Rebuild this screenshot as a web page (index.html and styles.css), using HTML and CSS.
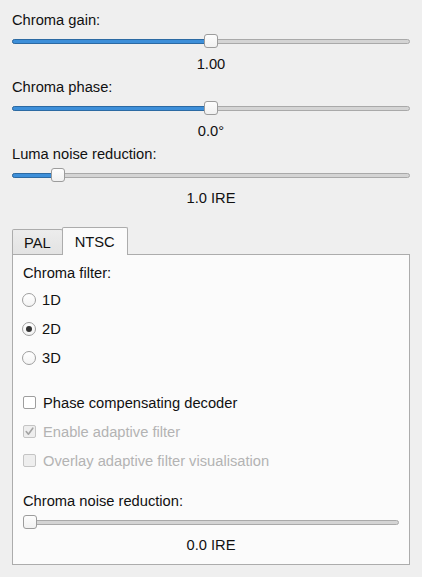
FILE: index.html
```html
<!DOCTYPE html>
<html>
<head>
<meta charset="utf-8">
<link rel="stylesheet" href="styles.css">
</head>
<body>
<div class="page">
  <div class="ctl">
    <div class="lbl">Chroma gain:</div>
    <div class="slider"><div class="groove"><div class="fill" style="width:50%"></div><div class="handle" style="left:calc((100% - 12px) * 0.5)"></div></div></div>
    <div class="val">1.00</div>
  </div>
  <div class="ctl">
    <div class="lbl">Chroma phase:</div>
    <div class="slider"><div class="groove"><div class="fill" style="width:50%"></div><div class="handle" style="left:calc((100% - 12px) * 0.5)"></div></div></div>
    <div class="val">0.0°</div>
  </div>
  <div class="ctl">
    <div class="lbl">Luma noise reduction:</div>
    <div class="slider"><div class="groove"><div class="fill" style="width:11%"></div><div class="handle" style="left:calc((100% - 12px) * 0.102)"></div></div></div>
    <div class="val">1.0 IRE</div>
  </div>

  <div class="tabs">
    <div class="tabbar">
      <div class="tab">PAL</div>
      <div class="tab active">NTSC</div>
    </div>
    <div class="panel">
      <div class="plbl">Chroma filter:</div>
      <div class="group">
        <div class="opt"><span class="radio"></span><span>1D</span></div>
        <div class="opt"><span class="radio checked"></span><span>2D</span></div>
        <div class="opt"><span class="radio"></span><span>3D</span></div>
      </div>
      <div class="group checks">
        <div class="opt"><span class="box"></span><span>Phase compensating decoder</span></div>
        <div class="opt disabled"><span class="box checked"><svg width="11" height="11" viewBox="0 0 11 11"><path d="M2.2 5.6 L4.4 8.2 L8.8 2.2" fill="none" stroke="#a3a3a3" stroke-width="1.6" stroke-linecap="round" stroke-linejoin="round"/></svg></span><span>Enable adaptive filter</span></div>
        <div class="opt disabled"><span class="box"></span><span>Overlay adaptive filter visualisation</span></div>
      </div>
      <div class="ctl inner">
        <div class="lbl">Chroma noise reduction:</div>
        <div class="slider"><div class="groove"><div class="fill" style="width:0%"></div><div class="handle" style="left:0"></div></div></div>
        <div class="val">0.0 IRE</div>
      </div>
    </div>
  </div>
</div>
</body>
</html>
```

FILE: styles.css
```css
html, body {
  margin: 0;
  padding: 0;
  background: #efefef;
}
body {
  font-family: "Liberation Sans", Arial, sans-serif;
  font-size: 14.7px;
  color: #111;
  width: 422px;
  height: 577px;
  overflow: hidden;
}
.page {
  padding: 10px 12px 0 12px;
}
.ctl {
  display: flex;
  flex-direction: column;
}
.lbl {
  height: 20px;
  line-height: 20px;
  white-space: nowrap;
}
.slider {
  height: 22px;
  display: flex;
  align-items: center;
}
.groove {
  position: relative;
  flex: 1;
  height: 3px;
  border: 1px solid #a9a9a9;
  border-radius: 3px;
  background: #d4d4d4;
}
.fill {
  height: 100%;
  margin: -1px 0 0 -1px;
  border: 1px solid #2c6aa3;
  border-radius: 3px 0 0 3px;
  background: #3d8fd9;
}
.handle {
  position: absolute;
  top: -6px;
  margin-left: -1px;
  width: 12px;
  height: 12px;
  border: 1px solid #9c9c9c;
  border-radius: 3px;
  background: linear-gradient(#fdfdfd, #f1f1f1);
}
.val {
  height: 25px;
  line-height: 25px;
  text-align: center;
}
.tabs {
  margin-top: 16px;
}
.tabbar {
  display: flex;
  align-items: flex-end;
  height: 27px;
  position: relative;
  z-index: 1;
}
.tab {
  box-sizing: border-box;
  height: 25px;
  line-height: 26px;
  padding: 0 11px;
  border: 1px solid #acacac;
  border-bottom: none;
  border-radius: 2px 2px 0 0;
  background: linear-gradient(#ececec, #e3e3e3);
}
.tab.active {
  height: 28px;
  line-height: 28px;
  margin-bottom: -1px;
  margin-left: -1px;
  padding: 0 12px;
  background: #fbfbfb;
}
.panel {
  border: 1px solid #acacac;
  background: #fbfbfb;
  padding: 0 10px 6px 10px;
  width: 376px;
}
.plbl {
  margin-top: 9px;
  height: 18px;
  line-height: 18px;
}
.group {
  margin-top: 3px;
  display: flex;
  flex-direction: column;
}
.group.checks {
  margin-top: 16px;
}
.opt {
  height: 29px;
  display: flex;
  align-items: center;
  gap: 7px;
  white-space: nowrap;
}
.opt.disabled {
  color: #b3b3b3;
}
.radio {
  box-sizing: border-box;
  width: 14px;
  height: 14px;
  border: 1px solid #9e9e9e;
  border-radius: 50%;
  background: linear-gradient(#ffffff, #f3f3f3);
  display: flex;
  align-items: center;
  justify-content: center;
  margin-left: -1px;
  margin-right: -1px;
}
.radio.checked::after {
  content: "";
  width: 6px;
  height: 6px;
  border-radius: 50%;
  background: #333;
}
.box {
  box-sizing: border-box;
  width: 13px;
  height: 13px;
  border: 1px solid #9e9e9e;
  border-radius: 2px;
  background: #fff;
  display: flex;
  align-items: center;
  justify-content: center;
}
.opt.disabled .box {
  border-color: #c4c4c4;
  background: #eeeeee;
}
.ctl.inner {
  margin-top: 16px;
}
```
